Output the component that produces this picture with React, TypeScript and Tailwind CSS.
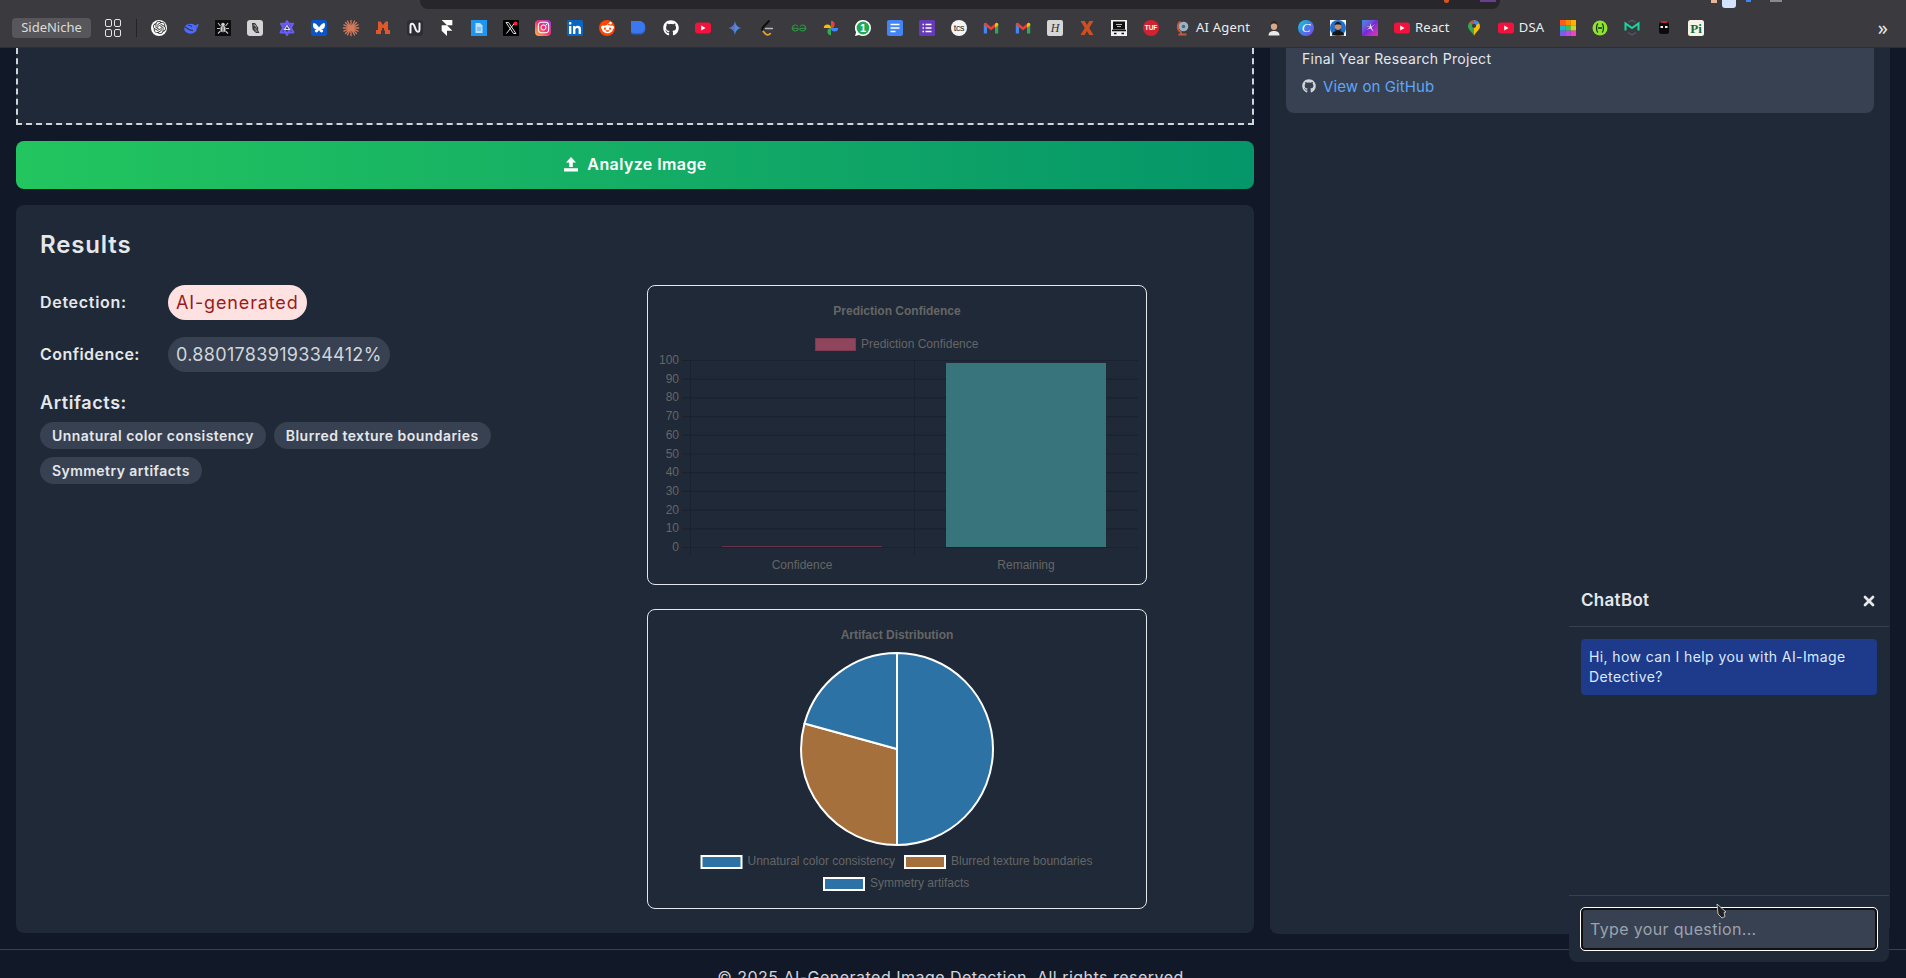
import React from "react";
import { FaGithub, FaRedditAlien, FaInstagram } from "react-icons/fa6";
import { SiOpenai, SiFramer } from "react-icons/si";
import { X } from "lucide-react";

const S = ({ children }: { children: React.ReactNode }) => (
  <svg width="16" height="16" viewBox="0 0 16 16" className="block overflow-visible">{children}</svg>
);

const YT = () => (
  <S>
    <rect x="0" y="2.500" width="16" height="11" rx="3" fill="#f3123c" />
    <path d="M6.200 5.500v5l4.400-2.500z" fill="#fff" />
  </S>
);

const Gmail = () => (
  <S>
    <path d="M.8 13.500V4.500c0-1 .8-1.800 1.800-1.800L4 3.800v9.700z" fill="#4285f4" />
    <path d="M15.200 13.500V4.500c0-1-.8-1.800-1.800-1.800L12 3.800v9.700z" fill="#34a853" />
    <path d="M2 3 4 3.800 8 7l4-3.200v3.400L8 10.300 4 7.200 1 5z" fill="#ea4335" />
    <path d="M12 3.800 13.500 2.800c1 0 1.700.8 1.700 1.800v.8L12 7.400z" fill="#fbbc04" />
  </S>
);

const icons: Record<string, React.ReactNode> = {
  gpt: (
    <span className="flex h-4 w-4 items-center justify-center rounded-full bg-white text-[#333]">
      <SiOpenai size={13} />
    </span>
  ),
  whale: (
    <S>
      <ellipse cx="7.500" cy="8.800" rx="6.300" ry="5" fill="#4d6bfe" />
      <path d="M11.500 6 15.800 3.500 14.500 8z" fill="#4d6bfe" />
      <path d="M1.500 6.500C4.500 8 6 11 10 10.300" fill="none" stroke="#3a3a3f" strokeWidth="1.300" />
      <path d="M5 5.500c1.500-.5 3 0 4 1.500" fill="none" stroke="#3a3a3f" strokeWidth="1.100" />
    </S>
  ),
  spider: (
    <S>
      <rect width="16" height="16" fill="#0c0c0c" />
      <ellipse cx="8" cy="9" rx="2.600" ry="3.300" fill="#d0d0d0" />
      <circle cx="8" cy="4.500" r="1.800" fill="#d0d0d0" />
      <path d="M5.500 6 3 3M10.500 6 13 3M5 8.500H2M11 8.500h3M5.500 11 3 13.500M10.500 11l2.500 2.500" stroke="#c4c4c4" strokeWidth="1.100" />
      <path d="M8 6.500v5.500" stroke="#0c0c0c" strokeWidth=".7" />
    </S>
  ),
  fig: (
    <S>
      <rect width="16" height="16" rx="3" fill="#d4d4d4" />
      <path d="M5 3h3l3.200 4.500v3L12.500 13H9L5.500 9.500z" fill="#3a3a3a" />
      <path d="M6.500 5h1.500l1.500 2.500M7.500 9h2M8.500 11h2" stroke="#d4d4d4" strokeWidth=".8" fill="none" />
    </S>
  ),
  star: (
    <S>
      <path d="M8 1 14.500 12.500H1.500zM2 3.800h12L8 15z" fill="none" stroke="#6a5cf6" strokeWidth="2" strokeLinejoin="round" />
      <path d="M8 5.500 10.500 9.500H5.500z" fill="none" stroke="#e2dfff" strokeWidth="1.100" />
    </S>
  ),
  fly: (
    <S>
      <rect width="16" height="16" rx="2.500" fill="#0a55c8" />
      <path d="M8 7.500C7 5.500 4.500 3 3 3S2 6 2.500 7.500 5 9.200 6 9c-1.500.5-2.800 1.200-2 2.500s2.800 1.500 4-1.500c1.200 3 3.200 2.800 4 1.500s-.5-2-2-2.500c1 .2 3 0 3.500-1.500S14.500 3 13 3 9 5.500 8 7.500z" fill="#fff" />
    </S>
  ),
  claude: (
    <S>
      <path d="M8 .3v15.400M.3 8h15.400M2.500 2.500l11 11M13.500 2.500l-11 11M4.500 1l7 14M11.500 1l-7 14M1 4.800l14 6.400M15 4.800 1 11.200" stroke="#d4795a" strokeWidth="1.300" strokeLinecap="round" />
      <circle cx="8" cy="8" r="2" fill="#d4795a" />
    </S>
  ),
  mistral: (
    <S>
      <path d="M3 1.500h2.500L8 5l2.500-3.500H13V10h2v4H10v-3.500H9V8H7v2.500H6V14H1v-4h2z" fill="#e0582a" />
    </S>
  ),
  n: (
    <S>
      <rect width="16" height="16" rx="3.500" fill="#2c2d35" />
      <path d="M3.500 12.500V6c0-3 2.500-3 3.500-.8l2 5c1 2.300 3.500 2 3.500-.8V3.500" fill="none" stroke="#f2f2f2" strokeWidth="2" strokeLinecap="round" />
    </S>
  ),
  framer: <SiFramer size={16} color="#fff" />,
  doc: (
    <S>
      <rect width="16" height="16" fill="#1e96f0" />
      <path d="M4.500 3h4.500l2.500 2.500V13h-7z" fill="#bfe0fa" />
      <path d="M6 8h4M6 10h4" stroke="#1e96f0" strokeWidth=".8" />
    </S>
  ),
  x: (
    <S>
      <rect width="16" height="16" rx="1" fill="#000" />
      <path d="M3 2.500h2.500L13 13.500h-2.500zM12 2.500 3.500 13.500" fill="none" stroke="#e0e0e0" strokeWidth="1" />
      <circle cx="12.500" cy="3.500" r="1.900" fill="#f0243c" />
    </S>
  ),
  ig: (
    <span className="flex h-4 w-4 items-center justify-center rounded-[4px] bg-gradient-to-tr from-[#fdb53c] via-[#ef2e6b] to-[#a32ee0] text-white">
      <FaInstagram size={13} />
    </span>
  ),
  li: (
    <span className="flex h-4 w-4 items-center justify-center rounded-[2px] bg-[#0a66c2]">
      <svg width="12" height="12" viewBox="0 0 12 12"><path d="M0 4h2.400v8H0zM1.200 0a1.300 1.300 0 1 1 0 2.700 1.300 1.300 0 0 1 0-2.700zM4 4h2.300v1.100C6.800 4.300 7.700 3.800 8.800 3.800c2.300 0 3.200 1.400 3.200 3.600V12H9.600V7.900c0-1-.3-1.900-1.400-1.900S6.400 6.900 6.400 8V12H4z" fill="#fff" /></svg>
    </span>
  ),
  reddit: (
    <span className="flex h-4 w-4 items-center justify-center rounded-full bg-[#ff4500] text-white">
      <FaRedditAlien size={13} />
    </span>
  ),
  d: (
    <S>
      <path d="M0 2.500h8.500c4 0 6 2.500 6 6s-2 6-6 6H2.500A2.500 2.500 0 0 1 0 12z" fill="#2c5fc9" />
      <path d="M0 1h8c4 0 6 2.500 6 6s-2 6-6 6H2.500A2.500 2.500 0 0 1 0 10.500z" fill="#3b78f0" />
    </S>
  ),
  github: <FaGithub size={16} color="#fff" />,
  yt: <YT />,
  gem: (
    <S>
      <path d="M8 1c.6 4 2.500 6.300 6.500 7-4 .7-5.900 3-6.500 7-.6-4-2.500-6.300-6.500-7C5.500 7.300 7.400 5 8 1z" fill="#4a8fe0" />
      <path d="M8 1c-.6 4-2.500 6.300-6.500 7C5.500 8.700 7.400 11 8 15z" fill="#5c6bc0" opacity=".7" />
    </S>
  ),
  leet: (
    <S>
      <path d="M10 1 4.200 7c-1.300 1.300-1.300 3 0 4.300" fill="none" stroke="#0d0d0d" strokeWidth="1.800" strokeLinecap="round" />
      <path d="M4.200 11.300 6.500 13.800c1.300 1.200 3.400 1.200 4.700-.1" fill="none" stroke="#f0a020" strokeWidth="1.800" strokeLinecap="round" />
      <path d="M6.500 8.500h7" stroke="#b8b8b8" strokeWidth="1.400" strokeLinecap="round" />
    </S>
  ),
  gfg: (
    <S>
      <path d="M7.500 8.300H1.200C1.500 4.800 5.500 4 7 6.500M8.500 8.300h6.300C14.500 4.800 10.500 4 9 6.500M1.200 8.300c.3 3 4.800 3.500 6.300.7M14.800 8.300c-.3 3-4.800 3.500-6.300.7" fill="none" stroke="#2f8d46" strokeWidth="1.200" />
    </S>
  ),
  photos: (
    <S>
      <path d="M.8 8A3.600 3.600 0 0 1 8 8z" fill="#fbbc04" />
      <path d="M8 .8A3.600 3.600 0 0 1 8 8z" fill="#ea4335" />
      <path d="M15.200 8A3.600 3.600 0 0 1 8 8z" fill="#4285f4" />
      <path d="M8 15.200A3.600 3.600 0 0 1 8 8z" fill="#34a853" />
    </S>
  ),
  wa: (
    <svg width="16" height="16" viewBox="0 0 16 16" className="block">
      <path d="M8 0a8 8 0 0 1 0 16c-1.500 0-2.800-.4-4-1L0 16l1.100-3.800A8 8 0 0 1 8 0z" fill="#fff" />
      <circle cx="8" cy="8" r="6.400" fill="#1fa855" />
      <text x="8" y="11.800" textAnchor="middle" fontSize="11" fontWeight="700" fill="#fff" fontFamily="Liberation Sans, sans-serif">1</text>
    </svg>
  ),
  gdoc: (
    <S>
      <rect width="16" height="16" rx="2" fill="#4285f4" />
      <path d="M3.500 4.500h9M3.500 8h9M3.500 11.500h5" stroke="#fff" strokeWidth="1.500" />
    </S>
  ),
  form: (
    <S>
      <rect width="16" height="16" rx="1.500" fill="#673ab7" />
      <path d="M6.500 4.500h6M6.500 8h6M6.500 11.500h6M3.500 4.500h1.500M3.500 8h1.500M3.500 11.500h1.500" stroke="#fff" strokeWidth="1.500" />
    </S>
  ),
  tcs: (
    <S>
      <circle cx="8" cy="8" r="8" fill="#f4f4f4" />
      <text x="8" y="11" textAnchor="middle" fontSize="9" fill="#222" letterSpacing="-.4" fontFamily="Liberation Sans, sans-serif">tcs</text>
    </S>
  ),
  gmail: <Gmail />,
  h: (
    <S>
      <rect width="16" height="16" rx="2" fill="#d6d6d6" />
      <text x="8" y="12" textAnchor="middle" fontSize="12" fontStyle="italic" fill="#333" fontFamily="Liberation Serif, serif">H</text>
    </S>
  ),
  xo: (
    <S>
      <path d="M1.500 1h4.200L8 5l2.300-4h4.200l-4.300 7 4.300 7h-4.200L8 11l-2.300 4H1.500l4.300-7z" fill="#cf4f1f" />
    </S>
  ),
  box: (
    <S>
      <rect width="16" height="16" fill="#f2f2f2" />
      <rect x="2" y="1.500" width="12" height="8" fill="#111" />
      <path d="M5 4.500h6M6 6.500h4" stroke="#bbb" strokeWidth="1" />
      <path d="M1 10.500h14M3 13.500h2.500M10.500 13.500H13" stroke="#111" strokeWidth="1.500" />
    </S>
  ),
  tuf: (
    <S>
      <circle cx="8" cy="8" r="8" fill="#d3222f" />
      <text x="8" y="10.300" textAnchor="middle" fontSize="6.500" fontWeight="700" fill="#fff" fontFamily="Liberation Sans, sans-serif">TUF</text>
    </S>
  ),
  agent: (
    <S>
      <path d="M3.500 14.500h8M6 14V12C2 10.500 1.500 4 5.500 1.500" fill="none" stroke="#c85a38" strokeWidth="1.800" />
      <circle cx="8.500" cy="6.500" r="4.800" fill="#9cb2c2" />
      <circle cx="8.500" cy="6.500" r="1.800" fill="#4a6b85" />
    </S>
  ),
  person: (
    <S>
      <path d="M2.500 15.500c0-3.500 2.500-4.500 5.500-4.500s5.500 1 5.500 4.500z" fill="#e8e8e8" />
      <ellipse cx="8" cy="6" rx="3.200" ry="4" fill="#d9a888" />
      <path d="M4.700 5.500C4.500 2 6.500 1 8 1s3.500 1 3.300 4.500C10.500 4 9.500 3.500 8 3.500S5.500 4 4.700 5.500z" fill="#33261e" />
    </S>
  ),
  canva: (
    <span className="flex h-4 w-4 items-center justify-center rounded-full bg-gradient-to-br from-[#19c8d0] via-[#3b7fe8] to-[#7b34e0]">
      <span className="font-['Liberation_Serif'] text-[13px] leading-none text-white italic">C</span>
    </span>
  ),
  photo: (
    <S>
      <rect width="16" height="16" fill="#f4f4f4" />
      <circle cx="8" cy="8" r="8" fill="#1e6fd0" />
      <path d="M2 15.500c0-3.500 2.500-4.500 6-4.500s6 1 6 4.500z" fill="#151515" />
      <circle cx="8" cy="6.500" r="3.300" fill="#c49170" />
      <path d="M4.700 5.500C4.700 2.500 7 2 8 2s3.300.5 3.300 3.500L10 4.500H6z" fill="#1a1a1a" />
      <path d="M5 8c1 3 5 3 6 0l-.5 3h-5z" fill="#222" />
    </S>
  ),
  spark: (
    <span className="flex h-4 w-4 items-center justify-center bg-gradient-to-br from-[#1e8fe0] via-[#7a22d8] to-[#ef1fb0]">
      <svg width="11" height="11" viewBox="0 0 10 10"><path d="M5 1 5.700 4.300 9.500 1.500 6 5 8 9 5 6 1.500 7 4.300 5 .5 3.500 4.300 4.300z" fill="#e8e0f0" /></svg>
    </span>
  ),
  maps: (
    <svg width="12" height="18" viewBox="0 0 14 18" className="block">
      <path d="M7 0a7 7 0 0 1 7 7c0 4-4.500 6.500-7 11z" fill="#fbbc04" />
      <path d="M7 0a7 7 0 0 0-7 7c0 4 4.500 6.500 7 11z" fill="#34a853" />
      <path d="M2 2.200A7 7 0 0 1 7 0v4.500z" fill="#ea4335" />
      <path d="M7 0a7 7 0 0 1 6 3.500L7 7z" fill="#4285f4" />
      <circle cx="7" cy="6.500" r="2.500" fill="#3a3a3f" />
    </svg>
  ),
  grid: (
    <S>
      <rect x="0" y="0" width="5.400" height="5.400" fill="#ff5a1f" />
      <rect x="5.300" y="0" width="5.400" height="5.400" fill="#ff8a00" />
      <rect x="10.600" y="0" width="5.400" height="5.400" fill="#ffb300" />
      <rect x="0" y="5.300" width="5.400" height="5.400" fill="#18b8c4" />
      <rect x="5.300" y="5.300" width="5.400" height="5.400" fill="#35c35a" />
      <rect x="10.600" y="5.300" width="5.400" height="5.400" fill="#c2d92c" />
      <rect x="0" y="10.600" width="5.400" height="5.400" fill="#7a5cf0" />
      <rect x="5.300" y="10.600" width="5.400" height="5.400" fill="#c04ae8" />
      <rect x="10.600" y="10.600" width="5.400" height="5.400" fill="#f044c8" />
    </S>
  ),
  green: (
    <S>
      <circle cx="8" cy="8" r="7.500" fill="#8fe22f" />
      <path d="M6 3.500C4 5 4 11 6 12.500M10 3.500c2 1.500 2 7.500 0 9M6 8h4" fill="none" stroke="#1c3a10" strokeWidth="1.300" />
    </S>
  ),
  m: (
    <S>
      <path d="M1.500 10.500V3.500L8 8l6.500-4.500v7" fill="none" stroke="#18d6a0" strokeWidth="2" />
      <path d="M4 12.500 8 15l4-2.500M4.500 2 8 .3 11.500 2" fill="none" stroke="#4c5a70" strokeWidth="1.300" />
    </S>
  ),
  ninja: (
    <S>
      <rect x="3" y="2" width="10" height="12" rx="2.500" fill="#0b0b0b" />
      <rect x="5" y="1" width="6" height="2" fill="#c1272d" />
      <rect x="4.500" y="6" width="2.500" height="2" fill="#f2f2f2" />
      <rect x="9" y="6" width="2.500" height="2" fill="#f2f2f2" />
    </S>
  ),
  pi: (
    <S>
      <rect width="16" height="16" rx="2.500" fill="#f7f3e6" />
      <text x="8" y="12.800" textAnchor="middle" fontSize="13" fontWeight="700" fill="#0f6b3c" fontFamily="Liberation Serif, serif">Pi</text>
    </S>
  ),
};

const Bm = ({ k }: { k: string }) => (
  <div className="flex h-8 w-8 shrink-0 items-center justify-center">{icons[k]}</div>
);

const Lb = ({ k, t }: { k: string; t: string }) => (
  <div className="flex h-8 shrink-0 items-center gap-[5px] px-2">
    <span className="flex w-4 justify-center">{icons[k]}</span>
    <span className="text-[13px] tracking-[0.2px] text-[#ececec]">{t}</span>
  </div>
);

const first = ["gpt","whale","spider","fig","star","fly","claude","mistral","n","framer","doc","x","ig","li","reddit","d","github","yt","gem","leet","gfg","photos","wa","gdoc","form","tcs","gmail","gmail","h","xo","box","tuf"];

const Browser = () => (
  <div className="relative flex h-12 shrink-0 items-center border-b border-[#2e2e33] bg-[#3a3a3f] pt-[8px] pl-3 font-['Noto_Sans',sans-serif]">
    <div className="absolute top-0 left-[420px] h-[9px] w-[1080px] rounded-b-lg bg-[#26262b]">
      <span className="absolute top-0 left-[1024px] h-[3px] w-[5px] rounded-b-full bg-[#d9541e]" />
      <span className="absolute top-0 left-[1060px] h-[2px] w-[16px] bg-[#6b3d8f]" />
    </div>
    <span className="absolute top-0 left-[1711px] h-[3px] w-[6px] bg-[#e8b59a]" />
    <span className="absolute top-0 left-[1722px] h-[8px] w-[14px] rounded-b-[3px] bg-[#d3e3fd]" />
    <span className="absolute top-0 left-[1746px] h-[2px] w-[5px] bg-[#4285f4]" />
    <span className="absolute top-0 left-[1770px] h-[2px] w-[12px] bg-[#8a8a8a]" />
    <div className="flex h-5 w-[79px] shrink-0 items-center justify-center rounded bg-[#56565b] text-[13px] text-[#dcdcdc]">SideNiche</div>
    <div className="ml-[14px] grid h-[18px] w-[16px] shrink-0 grid-cols-2 gap-[2px]">
      <span className="rounded-[2px] border border-[#e4e4e4]" />
      <span className="rounded-[2px] border border-[#e4e4e4]" />
      <span className="rounded-[2px] border border-[#e4e4e4]" />
      <span className="rounded-[2px] border border-[#e4e4e4]" />
    </div>
    <div className="mr-[6px] ml-[15px] h-[18px] w-px shrink-0 bg-[#232326]" />
    {first.map((k, i) => <Bm key={i} k={k} />)}
    <Lb k="agent" t="AI Agent" />
    <Bm k="person" />
    <Bm k="canva" />
    <Bm k="photo" />
    <Bm k="spark" />
    <Lb k="yt" t="React" />
    <Bm k="maps" />
    <Lb k="yt" t="DSA" />
    <Bm k="grid" />
    <Bm k="green" />
    <Bm k="m" />
    <Bm k="ninja" />
    <Bm k="pi" />
    <span className="ml-auto pr-[18px] text-[20px] leading-none text-[#e8e8e8]">»</span>
  </div>
);

const ticks = [100, 90, 80, 70, 60, 50, 40, 30, 20, 10, 0];

const BarChart = () => (
  <svg width="498" height="298" viewBox="648 286 498 298" className="block" fontFamily="Liberation Sans, Arial, sans-serif" fontSize="12" fill="#666">
    <text x="897" y="315" textAnchor="middle" fontWeight="700">Prediction Confidence</text>
    <rect x="815.500" y="338.500" width="40" height="12" fill="#8f465d" stroke="#7f3a52" />
    <text x="861" y="348">Prediction Confidence</text>
    {ticks.map((t, i) => {
      const y = 360.500 + i * 18.700;
      return (
        <g key={t}>
          <line x1="682" x2="1138" y1={y} y2={y} stroke="#1a222d" />
          <text x="679" y={y + 3.500} textAnchor="end">{t}</text>
        </g>
      );
    })}
    <line x1="690.500" x2="690.500" y1="360" y2="555" stroke="#1a222d" />
    <line x1="914.500" x2="914.500" y1="360" y2="555" stroke="#1a222d" />
    <rect x="946" y="363" width="160" height="184" fill="#37747b" />
    <rect x="722" y="546" width="160" height="1" fill="#6b3347" />
    <text x="802" y="569" textAnchor="middle">Confidence</text>
    <text x="1026" y="569" textAnchor="middle">Remaining</text>
  </svg>
);

const PieChart = () => (
  <svg width="498" height="298" viewBox="648 610 498 298" className="block" fontFamily="Liberation Sans, Arial, sans-serif" fontSize="12" fill="#666">
    <text x="897" y="639" textAnchor="middle" fontWeight="700">Artifact Distribution</text>
    <g stroke="#fff" strokeWidth="2" strokeLinejoin="round">
      <path d="M897 749V653A96 96 0 0 1 897 845z" fill="#2d72a5" />
      <path d="M897 749V845A96 96 0 0 1 804.500 723.500z" fill="#a5703c" />
      <path d="M897 749 804.500 723.500A96 96 0 0 1 897 653z" fill="#2d72a5" />
    </g>
    <rect x="701.500" y="856" width="40" height="12" fill="#2d72a5" stroke="#fff" strokeWidth="2" />
    <text x="747.500" y="865">Unnatural color consistency</text>
    <rect x="905" y="856" width="40" height="12" fill="#a5703c" stroke="#fff" strokeWidth="2" />
    <text x="951" y="865">Blurred texture boundaries</text>
    <rect x="824" y="878" width="40" height="12" fill="#2d72a5" stroke="#fff" strokeWidth="2" />
    <text x="870" y="887">Symmetry artifacts</text>
  </svg>
);

const Chip = ({ children }: { children: React.ReactNode }) => (
  <span className="flex h-[27px] items-center rounded-full bg-[#374151] px-3 text-sm font-semibold tracking-[0.45px] text-[#e5e7eb]">{children}</span>
);

export default function App() {
  return (
    <div className="relative flex h-[978px] w-[1906px] flex-col overflow-hidden bg-[#111827] font-['Inter',sans-serif] text-[#e5e7eb]">
      <Browser />
      <div className="flex shrink-0 gap-4 px-4">
        <div className="flex w-[1238px] shrink-0 flex-col gap-4">
          <div className="h-[77px] border-x-2 border-b-2 border-dashed border-[#d1d5db] bg-[#1f2937]" />
          <button className="flex h-12 items-center justify-center gap-2 rounded-lg bg-gradient-to-r from-[#22c55e] to-[#059669] pb-[2px] font-semibold tracking-[0.4px] text-white">
            <svg width="16" height="16" viewBox="0 0 16 16"><path d="M8 1l5 5.500H9.800V11H6.200V6.500H3zM1 12.200h14V15.500H1z" fill="#fff" /></svg>
            Analyze Image
          </button>
          <div className="grid h-[728px] grid-cols-2 content-start gap-6 rounded-lg bg-[#1f2937] p-6">
            <div>
              <h2 className="mb-[24px] text-2xl leading-8 font-semibold tracking-[0.85px] text-[#e5e7eb]">Results</h2>
              <div className="flex items-center">
                <span className="w-[128px] pb-[1px] font-semibold tracking-[0.7px]">Detection:</span>
                <span className="flex h-[35px] items-center rounded-full bg-[#fee2e2] px-2 text-lg tracking-[0.85px] text-[#991b1b]">AI-generated</span>
              </div>
              <div className="mt-[17px] flex items-center">
                <span className="w-[128px] pb-[1px] font-semibold tracking-[0.45px]">Confidence:</span>
                <span className="flex h-[35px] items-center rounded-full bg-[#374151] px-2 text-lg tracking-[0.32px] text-[#d1d5db]">0.8801783919334412%</span>
              </div>
              <h3 className="mt-[17px] text-lg leading-7 font-semibold tracking-[0.6px]">Artifacts:</h3>
              <div className="mt-[5px] flex flex-wrap gap-2">
                <Chip>Unnatural color consistency</Chip>
                <Chip>Blurred texture boundaries</Chip>
                <Chip>Symmetry artifacts</Chip>
              </div>
            </div>
            <div className="mt-[56px] flex w-[500px] flex-col gap-6">
              <div className="rounded-lg border border-[#e5e7eb] bg-[#1f2937]"><BarChart /></div>
              <div className="rounded-lg border border-[#e5e7eb] bg-[#1f2937]"><PieChart /></div>
            </div>
          </div>
        </div>
        <div className="h-[886px] w-[620px] shrink-0 rounded-b-lg bg-[#1f2937] px-4">
          <div className="flex h-[65px] flex-col justify-end rounded-b-lg bg-[#374151] px-4 pb-[16px] text-sm">
            <p className="mb-[-1px] tracking-[0.3px] text-[#e5e7eb]">Final Year Research Project</p>
            <a className="mt-2 flex items-center gap-[7px] text-[#60a5fa]">
              <FaGithub size={14} color="#d1d5db" />
              <span className="text-[15px] tracking-[0.1px]">View on GitHub</span>
            </a>
          </div>
        </div>
      </div>
      <footer className="mt-[15px] shrink-0 border-t border-[#374151] pt-[15px] text-center tracking-[0.48px] text-[#d1d5db]">
        © 2025 AI-Generated Image Detection. All rights reserved.
      </footer>

      <div className="absolute right-[17px] bottom-4 flex h-[387px] w-[320px] flex-col rounded-b-lg bg-[#1f2937]">
        <div className="flex h-[52px] shrink-0 items-center justify-between border-b border-[#374151] px-3 pt-[1px]">
          <span className="text-[17px] font-semibold tracking-[0.3px] text-[#e5e7eb]">ChatBot</span>
          <X size={16} strokeWidth={4} color="#e5e7eb" />
        </div>
        <div className="flex-1 p-3">
          <div className="rounded bg-[#1e3a8a] px-2 py-2 text-sm leading-5 tracking-[0.4px] text-[#dbeafe]">Hi, how can I help you with AI-Image Detective?</div>
        </div>
        <div className="shrink-0 border-t border-[#374151] p-3">
          <input
            placeholder="Type your question..."
            readOnly
            className="block h-[42px] w-full rounded border-2 border-[#111] bg-[#374151] px-[7px] pb-[1px] text-base tracking-[0.35px] text-white outline-[1.5px] outline-white placeholder:text-[#9ca3af]"
          />
        </div>
      </div>
      <svg width="12" height="16" viewBox="0 0 12 16" className="absolute top-[903px] left-[1716px]">
        <path d="M1 1l9 8-2 .5 1 4-3 1.500L2 11z" fill="#222" stroke="#ddd" strokeWidth=".8" />
      </svg>
    </div>
  );
}
